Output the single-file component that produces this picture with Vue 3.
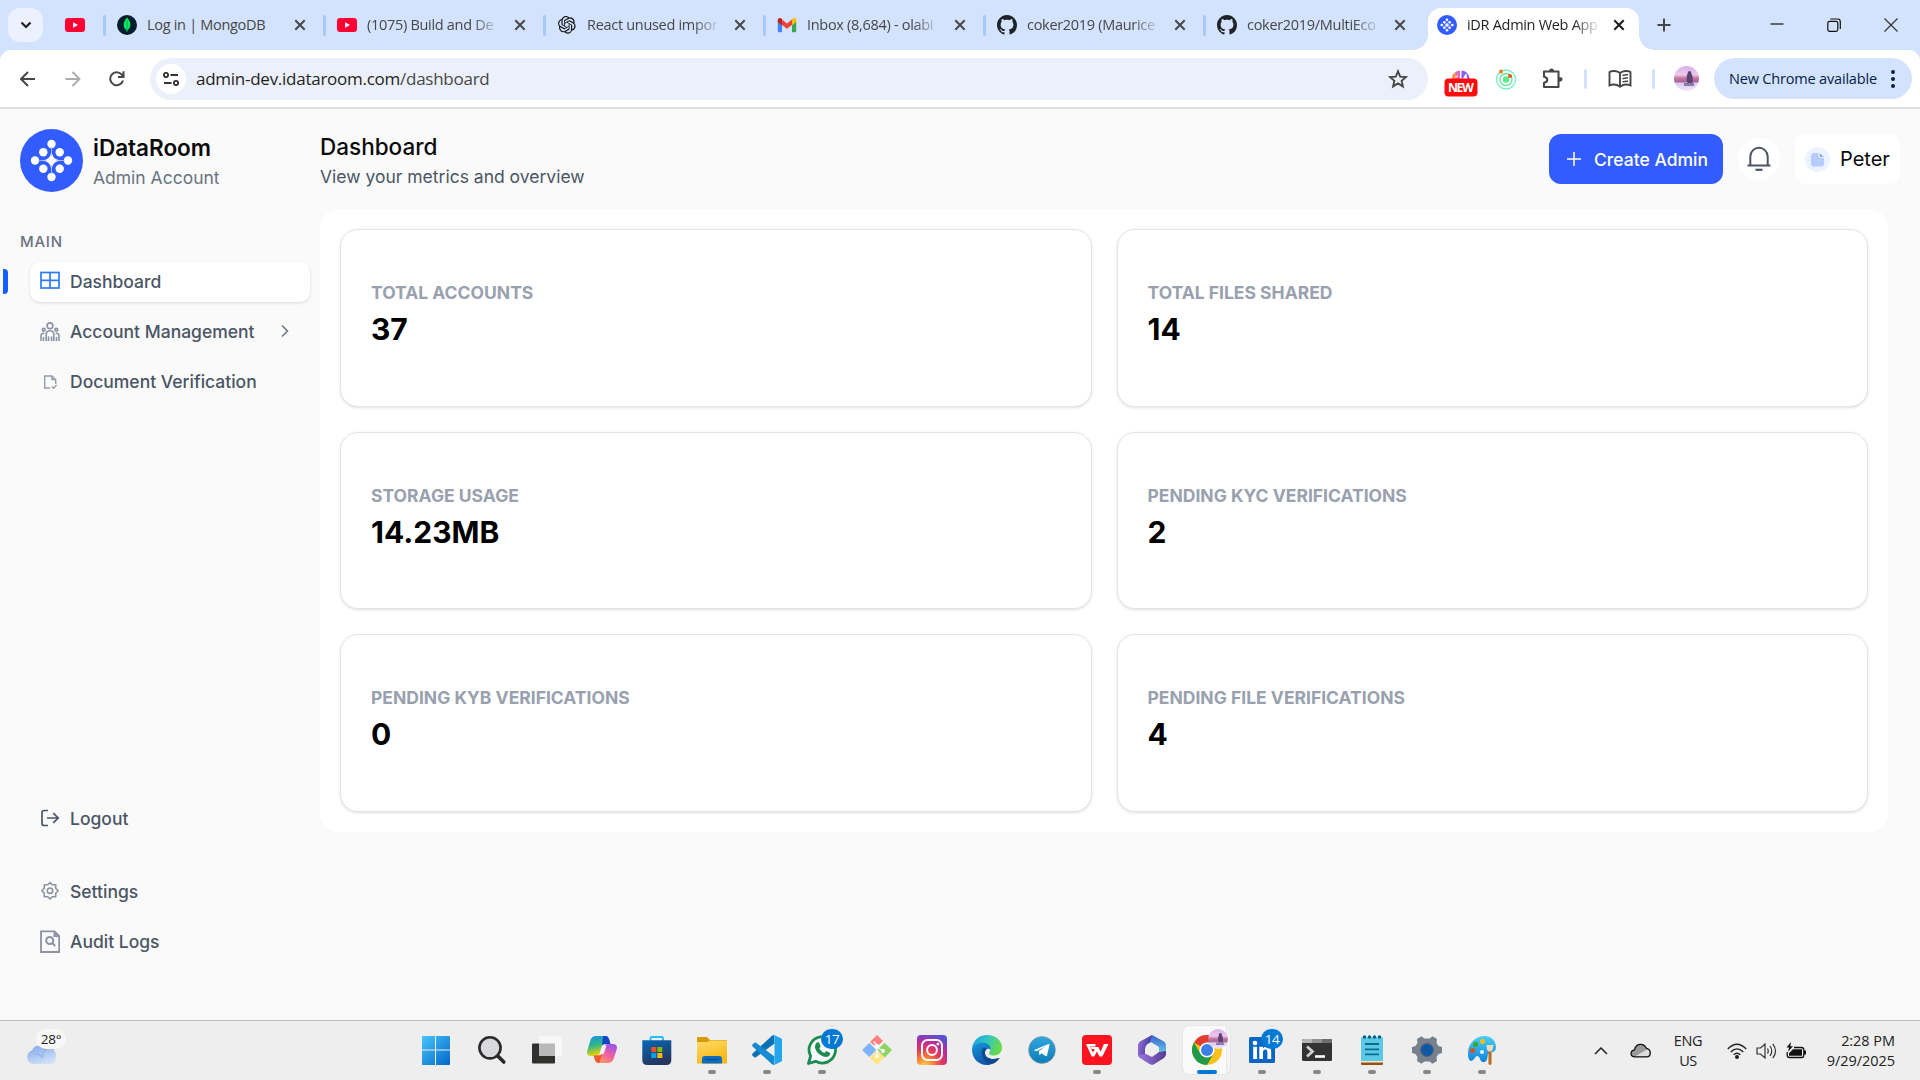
<script setup>
const logo = `<circle cx="31.5" cy="31.5" r="31.5" fill="#325cff"/><g fill="#fff"><circle cx="31.5" cy="15" r="4.2"/><circle cx="23.3" cy="23.2" r="4.2"/><circle cx="39.7" cy="23.2" r="4.2"/><circle cx="15" cy="31.5" r="4.2"/><circle cx="48" cy="31.5" r="4.2"/><circle cx="23.3" cy="39.8" r="4.2"/><circle cx="39.7" cy="39.8" r="4.2"/><circle cx="31.5" cy="48" r="4.2"/><path d="M31.5 25.5Q32.8 30.2 37.5 31.5Q32.8 32.8 31.5 37.5Q30.2 32.8 25.500 31.5Q30.2 30.2 31.5 25.500z" stroke="#fff" stroke-width="1.6"/></g><path d="M18 31.5H27M36 31.5H45M31.5 18V27M31.5 36V45" stroke="#b9c8ff" stroke-width=".8"/>`
const youtube = `<rect x="0" y="3" width="20" height="14" rx="3.2" fill="#ff0033"/><path d="M8 7.2v5.6l5-2.8z" fill="#fff"/>`
const github = `<path transform="scale(1.25)" fill="#1f2328" d="M8 0C3.58 0 0 3.58 0 8c0 3.54 2.29 6.53 5.47 7.59.4.07.55-.17.55-.38 0-.19-.01-.82-.01-1.49-2.01.37-2.53-.49-2.69-.94-.09-.23-.48-.94-.82-1.13-.28-.15-.68-.52-.01-.53.63-.01 1.08.58 1.23.82.72 1.21 1.87.87 2.33.66.07-.52.28-.87.51-1.07-1.78-.2-3.64-.89-3.64-3.95 0-.87.31-1.59.82-2.15-.08-.2-.36-1.02.08-2.12 0 0 .67-.21 2.2.82.64-.18 1.32-.27 2-.27.68 0 1.36.09 2 .27 1.53-1.04 2.2-.82 2.2-.82.44 1.1.16 1.92.08 2.12.51.56.82 1.27.82 2.15 0 3.07-1.87 3.75-3.65 3.95.29.25.54.73.54 1.48 0 1.07-.01 1.93-.01 2.2 0 .21.15.46.55.38A8.013 8.013 0 0016 8c0-4.42-3.58-8-8-8z"/>`
const tabs = [
  { title: 'Log in | MongoDB', short: true, icon: `<circle cx="10" cy="10" r="10" fill="#001e2b"/><path d="M10 2.6C12.4 5.2 13.4 7.600 13.300 10c-.1 2.300-1.300 4.200-2.900 5.300L10.200 17h-.5l-.2-1.700C7.900 14.200 6.700 12.300 6.700 10 6.700 7.600 7.700 5.200 10 2.600z" fill="#00ed64"/><path d="M10 5v10" stroke="#0a9c47" stroke-width=".8"/>` },
  { title: '(1075) Build and De', icon: youtube },
  { title: 'React unused impor', icon: `<path transform="translate(1 1) scale(.735)" fill="#111" d="M22.2819 9.8211a5.9847 5.9847 0 0 0-.5157-4.9108 6.0462 6.0462 0 0 0-6.5098-2.9A6.0651 6.0651 0 0 0 4.9807 4.1818a5.9847 5.9847 0 0 0-3.9977 2.9 6.0462 6.0462 0 0 0 .7427 7.0966 5.98 5.98 0 0 0 .511 4.9107 6.051 6.051 0 0 0 6.5146 2.9001A5.9847 5.9847 0 0 0 13.2599 24a6.0557 6.0557 0 0 0 5.7718-4.2058 5.9894 5.9894 0 0 0 3.9977-2.9001 6.0557 6.0557 0 0 0-.7475-7.0729zm-9.022 12.6081a4.4755 4.4755 0 0 1-2.8764-1.0408l.1419-.0804 4.7783-2.7582a.7948.7948 0 0 0 .3927-.6813v-6.7369l2.02 1.1686a.071.071 0 0 1 .038.052v5.5826a4.504 4.504 0 0 1-4.4945 4.4944zm-9.6607-4.1254a4.4708 4.4708 0 0 1-.5346-3.0137l.142.0852 4.783 2.7582a.7712.7712 0 0 0 .7806 0l5.8428-3.3685v2.3324a.0804.0804 0 0 1-.0332.0615L9.74 19.9502a4.4992 4.4992 0 0 1-6.1408-1.6464zM2.3408 7.8956a4.485 4.485 0 0 1 2.3655-1.9728V11.6a.7664.7664 0 0 0 .3879.6765l5.8144 3.3543-2.0201 1.1685a.0757.0757 0 0 1-.071 0l-4.8303-2.7865A4.504 4.504 0 0 1 2.3408 7.872zm16.5963 3.8558L13.1038 8.364 15.1192 7.2a.0757.0757 0 0 1 .071 0l4.8303 2.7913a4.4944 4.4944 0 0 1-.6765 8.1042v-5.6772a.79.79 0 0 0-.407-.667zm2.0107-3.0231l-.142-.0852-4.7735-2.7818a.7759.7759 0 0 0-.7854 0L9.409 9.2297V6.8974a.0662.0662 0 0 1 .0284-.0615l4.8303-2.7866a4.4992 4.4992 0 0 1 6.6802 4.66zM8.3065 12.863l-2.02-1.1638a.0804.0804 0 0 1-.038-.0567V6.0742a4.4992 4.4992 0 0 1 7.3757-3.4537l-.142.0805L8.704 5.459a.7948.7948 0 0 0-.3927.6813zm1.0976-2.3654l2.602-1.4998 2.6069 1.4998v2.9994l-2.5974 1.4997-2.6067-1.4997Z"/>` },
  { title: 'Inbox (8,684) - olabi', icon: `<path d="M.8 6v10c0 .7.5 1.200 1.200 1.200h3V9z" fill="#4285f4"/><path d="M15 9v8.200h3c.7 0 1.200-.5 1.200-1.200V6z" fill="#34a853"/><path d="M5 4.500 10 8.400l5-3.900V10l-5 3.800L5 10z" fill="#ea4335"/><path d="M.8 5.200C.8 3 3.200 2.300 5 4v6.200L.8 7z" fill="#c5221f"/><path d="M19.200 5.200C19.200 3 16.800 2.300 15 4v6.200L19.200 7z" fill="#fbbc04"/>` },
  { title: 'coker2019 (Maurice', icon: github },
  { title: 'coker2019/MultiEco', icon: github },
]
const nav = [
  { label: 'Dashboard', active: true, icon: `<g fill="none" stroke="#2f7bf6" stroke-width="1.700"><rect x="1" y="1.500" width="18" height="15.500"/><path d="M10 1.500v16M1 9.300h18"/></g>` },
  { label: 'Account Management', arrow: true, icon: `<g fill="none" stroke="#8c92a4" stroke-width="1.600" stroke-linecap="round"><circle cx="10" cy="4.800" r="2.900"/><circle cx="3.700" cy="8.800" r="1.400"/><circle cx="16.300" cy="8.800" r="1.400"/><path d="M6.200 19.500v-6c0-5 7.600-5 7.600 0v6M8.500 19.500v-3.500M11.500 19.500v-3.500M1 19.500v-4.500c0-2 1.300-3 2.800-2.600M19 19.500v-4.500c0-2-1.300-3-2.800-2.600M3.500 19.500v-3M16.500 19.500v-3"/></g>` },
  { label: 'Document Verification', icon: `<g fill="none" stroke="#979caf" stroke-width="1.400"><path d="M10 17H4.700V5H12l3.700 3.700V13M12 5v3.500h3.500M11.700 15.500l1.900 1.800 3-3.300"/></g>` },
]
const lower = [
  { label: 'Logout', icon: `<g fill="none" stroke="#4b5565" stroke-width="1.700"><path d="M8 2.500H4.200C2.800 2.500 2 3.300 2 4.500v11c0 1.300.8 2 2.200 2H8M7 10h11.200M13.200 5.200 18.200 10l-5 4.800"/></g>` },
  { label: 'Settings', icon: `<g fill="none" stroke="#8c92a4" stroke-width="1.600" stroke-linejoin="round"><path d="M10 1.500 12.200 3.700H15.700V7.200L18.200 9.700 15.700 12.200V15.700H12.200L10 18 7.800 15.700H4.300V12.200L1.800 9.700 4.300 7.200V3.700H7.800z"/><circle cx="10" cy="9.700" r="2.700"/></g>` },
  { label: 'Audit Logs', icon: `<path d="M1 .3H14.500L19.200 5V21H1z" fill="none" stroke="#8c92a4" stroke-width="1.800"/><path d="M13.500 0v6h6z" fill="#8c92a4"/><g fill="none" stroke="#8c92a4" stroke-width="2"><circle cx="9.700" cy="9.500" r="3.500"/><path d="m12.200 12 3 3"/></g>` },
]
const cards = [
  ['TOTAL ACCOUNTS', '37'], ['TOTAL FILES SHARED', '14'],
  ['STORAGE USAGE', '14.23MB'], ['PENDING KYC VERIFICATIONS', '2'],
  ['PENDING KYB VERIFICATIONS', '0'], ['PENDING FILE VERIFICATIONS', '4'],
]
const avatar = `<defs><clipPath id="av"><circle cx="12.500" cy="12.500" r="12.500"/></clipPath><linearGradient id="avg" x2="0" y2="1"><stop offset="0" stop-color="#d9b0e8"/><stop offset=".35" stop-color="#ecc8ee"/><stop offset=".48" stop-color="#c67a9f"/><stop offset=".62" stop-color="#a9659a"/><stop offset=".7" stop-color="#dccbee"/><stop offset="1" stop-color="#f1e6f7"/></linearGradient></defs><g clip-path="url(#av)"><rect width="25" height="25" fill="url(#avg)"/><path d="M13.500 8c0-4 4-4 4 0 1.500 2 1.500 6 1 9h-5c-1.500-3-1-7 0-9z" fill="#5a4272"/><path d="M10 17h10v3H10z" fill="#8b7aae"/></g>`
const apps = [
  { name: 'start', icon: `<defs><linearGradient id="w1" gradientUnits="userSpaceOnUse" x1="0" y1="0" x2="29" y2="30"><stop offset="0" stop-color="#4cc8fb"/><stop offset="1" stop-color="#0067c8"/></linearGradient></defs><path transform="translate(-1 0)" fill="url(#w1)" d="M0 2q0-1 1-1h13v13.500H0zM15 1h13q1 0 1 1v12.500H15zM0 15.500h14V30H1q-1 0-1-1zM15 15.500h14V29q0 1-1 1H15z"/>` },
  { name: 'search', icon: `<circle cx="13" cy="12.800" r="10.600" fill="#d9dadd" stroke="#2a2a2a" stroke-width="2.600"/><path d="m20.800 21 6 6" stroke="#2a2a2a" stroke-width="3.600" stroke-linecap="round"/>` },
  { name: 'tasks', icon: `<rect x="0" y="8.500" width="23" height="20" rx="1" fill="#30302f"/><rect x="7" y="1" width="23" height="20" rx="1" fill="#f7f7f7"/><path d="M7 8.500h16V21H7z" fill="#b9b9b9"/>` },
  { name: 'copilot', icon: `<defs><linearGradient id="c1" x2=".3" y2="1"><stop offset="0" stop-color="#1b8ff0"/><stop offset=".5" stop-color="#2fb68c"/><stop offset="1" stop-color="#f4d500"/></linearGradient><linearGradient id="c2" x1=".8" x2=".2" y2="1"><stop offset="0" stop-color="#9a55ee"/><stop offset=".5" stop-color="#ee5fa0"/><stop offset="1" stop-color="#ffa05a"/></linearGradient></defs><path d="M9 1H19q2 0 3 3l1.500 5H18c-2 0-3 1-3.500 3l-2 7q-.6 2-2.600 2H4c-4 0-4.500-3-3.500-6L3.500 5Q5 1 9 1z" fill="url(#c1)"/><path d="M16 1h3q2 0 3 3l1.500 5H18q-2 0-3 2z" fill="#1546c8"/><path d="M21 28H11q-2 0-3-3l-1.300-4.500H12c2 0 3-1 3.500-3l2-6.500q.6-2 2.600-2H26c4 0 4.500 3 3.500 6L26.500 24Q25 28 21 28z" fill="url(#c2)"/><path d="M6.700 20.500H12q2 0 3-2l-2.500 9.500H11q-2 0-3-3z" fill="#ee5a35"/><path d="M15.500 10.500h4l-2.800 8.500h-4z" fill="#f6f1f4"/>` },
  { name: 'store', icon: `<defs><linearGradient id="s1" x2=".4" y2="1"><stop offset="0" stop-color="#0568b9"/><stop offset="1" stop-color="#26365d"/></linearGradient></defs><path d="M8.500 7V3.500q0-1.500 1.500-1.500h9.500q1.500 0 1.500 1.500V7" fill="none" stroke="#21bdf3" stroke-width="1.900"/><path d="M.3 5.200h29V25q0 5-5 5h-19q-5 0-5-5z" fill="url(#s1)"/><path d="M9.300 12h5v5h-5z" fill="#f25022"/><path d="M15.300 12h5v5h-5z" fill="#7fba00"/><path d="M9.300 18h5v5h-5z" fill="#00a4ef"/><path d="M15.300 18h5v5h-5z" fill="#ffb900"/>` },
  { name: 'files', run: 1, icon: `<defs><linearGradient id="f1" x2=".4" y2="1"><stop offset="0" stop-color="#ffdc6c"/><stop offset="1" stop-color="#f8b712"/></linearGradient></defs><path d="M0 3q0-1 1-1h9l3 3h16q1 0 1 1v5H0z" fill="#d99a05"/><path d="M0 7h10l3-1.500h17V28.500H0z" fill="url(#f1)"/><path d="M5 28.500V24q0-3 3-3h14q3 0 3 3v4.500z" fill="#0f6cbd"/><path d="M8.500 24.500h13" stroke="#0a4689"/>` },
  { name: 'code', run: 1, icon: `<path d="M22 0 22.500 8.500 4 22.300Q3 23 2 22L.5 20.500Q-.3 19.500.6 18.500L20 .8z" fill="#0a71b4"/><path d="M.6 11.500Q-.3 10.500.5 9.500L2 8Q3 7 4 7.700L22.500 21.500 22 30 20 29.200z" fill="#178bd2"/><path d="M22 0l7 3.200q1 .5 1 1.500v20.600q0 1-1 1.500L22 30q-1 .2-2-.8 2.500 1 2.500-1.200V2Q22.500-.2 20 .8 21-.2 22 0z" fill="#24a6ee"/>` },
  { name: 'whatsapp', run: 1, badge: '17', icon: `<path d="M1.500 28.500 3.600 21A13.200 13.200 0 1 1 8.700 26.300z" fill="#f7f9f8" stroke="#1f8b54" stroke-width="2.800" stroke-linejoin="round"/><path d="M10 7.500c1-.8 2-.2 2.500 1l1 2.500c.3.800-.8 1.800-1.200 2.300 1 2 2.500 3.600 5 4.700.8-.8 1.500-2 2.500-1.700l2.600 1.300c1 .5.700 1.700.2 2.600-1.200 2-4 2-6.200 1.200-4.300-1.500-7-4.500-8.200-8-.7-2.200 0-4.500 1.800-5.900z" fill="#1f8b54"/>` },
  { name: 'git', icon: `<path d="m15 0 6 6-3.500 3.500L11.500 10 8 7z" fill="#ff8080"/><path d="m15 30-7.300-7.300 5-5.200h5l4.600 5z" fill="#ffe680"/><path d="m7.300 8 7 7-7 7L0 15z" fill="#80b3ff"/><path d="m22.500 7.800 7.500 7.200-7.300 7.500L15.500 15z" fill="#8dd35f"/><path d="M11.500 6.500 15 10v11M15 12l6 4" stroke="#f7f2ea" stroke-width="1.500" fill="none"/><g fill="#fff"><circle cx="15" cy="11" r="2"/><circle cx="15" cy="21" r="2"/><circle cx="21" cy="16" r="2"/></g>` },
  { name: 'instagram', icon: `<defs><radialGradient id="i1" cx=".25" cy="1.050" r="1.100"><stop offset="0" stop-color="#ffd75a"/><stop offset=".25" stop-color="#fb8b33"/><stop offset=".52" stop-color="#e13a5c"/><stop offset=".78" stop-color="#b92b9c"/><stop offset="1" stop-color="#5a50d4"/></radialGradient></defs><rect width="30" height="30" rx="4" fill="url(#i1)"/><g fill="none" stroke="#fff" stroke-width="2"><rect x="5" y="5" width="20" height="20" rx="5.500"/><circle cx="15" cy="15" r="4.900"/></g><circle cx="20.900" cy="9.100" r="1.400" fill="#fff"/>` },
  { name: 'edge', icon: `<defs><linearGradient id="e1" x2="1" y2=".3"><stop offset="0" stop-color="#1b9de0"/><stop offset=".5" stop-color="#2fc3c8"/><stop offset="1" stop-color="#67d94e"/></linearGradient><linearGradient id="e2" x2=".6" y2="1"><stop offset="0" stop-color="#1596dd"/><stop offset="1" stop-color="#0f4da3"/></linearGradient></defs><path d="M0 13C1.500 4 8 0 15 0c9 0 15 6 15 12.500 0 5-3.500 8-8 8-4 0-5.500-1.500-4.500-3.500 2-4-1-7-5.500-7-5 0-9 2-12 5z" fill="url(#e1)"/><path d="M0 14.500C2 10 6 7.500 11 7.800c5 .3 8 3.700 7.500 6.700-3-2-6 1-5.500 4 .6 4.500 6 7 14.500 4.500C24 28 19.500 30 15 30 6 30 0 23 0 14.500z" fill="url(#e2)"/><path d="M10.500 13.500c-3 8 3 16 11.500 14.500 2-1 4-2.600 5.500-5-8.500 2.500-13.900 0-14.500-4.500-.3-2 .5-3.700 1.700-4.500-1.500-1.200-3-1.500-4.200-.5z" fill="#114a8b"/>` },
  { name: 'telegram', icon: `<defs><linearGradient id="t1" x2="0" y2="1"><stop offset="0" stop-color="#30a7df"/><stop offset="1" stop-color="#0c7db6"/></linearGradient></defs><circle cx="15" cy="15" r="13.400" fill="url(#t1)" stroke="#8b979d" stroke-width=".7"/><path d="M6.500 15.200 21.500 9q1.200-.3 1 1L20 20.500q-.4 1.200-1.500.5l-4-2.800-2 2-.8-4 6.800-5-8.500 4.700z" fill="#fff"/>` },
  { name: 'wps', run: 1, icon: `<rect width="30" height="30" rx="4" fill="#fb1320"/><path d="M6.500 14H15M4.800 9.800H13.500L16 20l4.700-9.500M5.500 10.500 10.500 20.500 14 13M18 9.800H25.300L20 20.500" fill="none" stroke="#fff" stroke-width="0"/><path d="M4 9h9.500v2.600H8l3 5.900 1.700-3.500H9.500l-1-2h8l2 4.800L22 9h4.500l-6.200 12.500h-2.800l-2.700-5-2.500 5H9.700z" fill="#fff"/>` },
  { name: 'office', icon: `<defs><linearGradient id="o1" x2="1" y2=".3"><stop offset="0" stop-color="#a06fd8"/><stop offset="1" stop-color="#3c3a9c"/></linearGradient><linearGradient id="o2" x2="0" y2="1"><stop offset="0" stop-color="#3a60cf"/><stop offset="1" stop-color="#62d3ed"/></linearGradient><linearGradient id="o3" x2="1"><stop offset="0" stop-color="#9b7ae0"/><stop offset="1" stop-color="#553a90"/></linearGradient></defs><path d="M15 0 3 6.500Q1 8 1 10v11l7 2V14q0-3 2.500-5L15 6.500z" fill="url(#o1)"/><path d="M15 0 27 6.500Q29 8 29 10v10l-7-3v-5L13 6.500z" fill="url(#o2)"/><path d="M1 20q0 2 2 3l10 6.300q2 1 4 0L27 23q2-1.500 2-4v-3l-7 1-7 5-6-3z" fill="url(#o3)"/><path d="m14.800 9.500 5.200 3v5.500l-5.200 3-5.200-3v-5.500z" fill="#eee"/>` },
  { name: 'chrome', run: 2, icon: `<circle cx="15" cy="15" r="15" fill="#fbc116"/><path d="M15 15 2 7.500A15 15 0 0 1 28 7.500H15z" fill="#e33b2e"/><path d="M2 7.500A15 15 0 0 0 15 30l6.500-11.200L8.500 18.800z" fill="#229a4a"/><circle cx="15" cy="15" r="7.600" fill="#fff"/><circle cx="15" cy="15" r="6" fill="#3f7de8"/>` },
  { name: 'linkedin', run: 1, badge: '14', icon: `<rect x="2" y="2" width="26" height="26" rx="1.500" fill="#0b65c3"/><g fill="#fff"><circle cx="8" cy="8" r="2.300"/><path d="M6.200 11.700H10V24H6.200zM12.300 11.700H16v1.700c.8-1.300 2-2 3.800-2 3.500 0 4.400 2.300 4.400 5.300V24h-3.800v-6.300c0-1.700-.2-3.100-2-3.100S16 16 16 17.600V24h-3.700z"/></g>` },
  { name: 'terminal', run: 1, icon: `<rect y="4" width="30" height="22" rx="1.500" fill="#333"/><path d="M0 8V5.500Q0 4 1.500 4H10v4z" fill="#b5b5b5"/><path d="M10 4h10v4H10z" fill="#929292"/><path d="M20 4h8.500Q30 4 30 5.500V8H20z" fill="#6d6d6d"/><path d="m5 11.500 5.500 5L5 21.500" fill="none" stroke="#d2d2d2" stroke-width="2.700"/><path d="M13 21.500h10" stroke="#fff" stroke-width="2.600"/>` },
  { name: 'notepad', run: 1, icon: `<path d="M4 26h22v3q0 1-1 1H5q-1 0-1-1z" fill="#9b4f12"/><path d="M4 3q0-1 1-1h20q1 0 1 1v24H4z" fill="#5bc9e4"/><path d="M4 26h22v1.500H4z" fill="#f5e9d8"/><g fill="#0b5b7c"><circle cx="7.500" cy="2" r="1.700"/><circle cx="12.500" cy="2" r="1.700"/><circle cx="17.500" cy="2" r="1.700"/><circle cx="22.500" cy="2" r="1.700"/></g><path d="M8 9h14M8 14.300h14M8 19.300h14" stroke="#096a93" stroke-width="1.800"/>` },
  { name: 'settings', run: 1, icon: `<path d="M9.500 1.300 12.500 3.500h5L20.500 1.300 25 4l-.5 4 2 3 3.500 1v6l-3.500 1-2 3 .5 4-4.500 2.700-3-2.200h-5l-3 2.200L5 26l.5-4-2-3L0 18v-6l3.500-1 2-3L5 4z" fill="#76818d"/><circle cx="15" cy="15" r="6.300" fill="#0f57a7" stroke="#525c68" stroke-width="1"/>` },
  { name: 'paint', run: 1, icon: `<defs><linearGradient id="p1" x2="0" y2="1"><stop offset="0" stop-color="#49d0f4"/><stop offset="1" stop-color="#1282d8"/></linearGradient></defs><path d="M17 1c7-.5 12 5 12 11 0 4-2 5-5 5.500-4 .5-3 4-4 7-.6 2-3 3-4.500 2.500-3-1-2-5-5-6-2-.6-3 4-6 5-3 0-3.500-4-3.500-8C1 9 8 1.500 17 1z" fill="url(#p1)"/><circle cx="15.500" cy="6.500" r="2.500" fill="#fbbb16"/><circle cx="8.500" cy="9.500" r="2.500" fill="#37a826"/><circle cx="5.500" cy="15.500" r="2.500" fill="#d9501f"/><circle cx="15" cy="17" r="2" fill="#e6f6fb"/><path d="M21.500 16h3v13q-1.500 2-3 0z" fill="#b86b1d"/><path d="M19.500 10h7l-.8 4.500-1.200 2h-3l-1.500-2z" fill="#eadac0"/>` },
]
</script>

<template>
  <div class="screen">
    <div class="strip">
      <div class="tabsearch"><svg width="12" height="8" viewBox="0 0 12 8"><path d="m1.500 1.500 4.500 4.500 4.500-4.500" fill="none" stroke="#1f1f1f" stroke-width="2.200" /></svg></div>
      <div class="pinned"><svg width="20" height="20" viewBox="0 0 20 20" v-html="youtube"></svg></div>
      <div v-for="t in tabs" :key="t.title" class="tab">
        <i class="sep"></i>
        <svg width="20" height="20" viewBox="0 0 20 20" v-html="t.icon"></svg>
        <span class="title" :class="{ fade: !t.short }">{{ t.title }}</span>
        <svg class="x" width="12" height="12" viewBox="0 0 12 12"><path d="m1.300 1.300 9.400 9.400m0-9.400-9.400 9.400" stroke="#474747" stroke-width="2" /></svg>
      </div>
      <div class="tab active">
        <svg width="20" height="20" viewBox="0 0 63 63" v-html="logo"></svg>
        <span class="title fade">iDR Admin Web App</span>
        <svg class="x" width="12" height="12" viewBox="0 0 12 12"><path d="m1.300 1.300 9.400 9.400m0-9.400-9.400 9.400" stroke="#1f1f1f" stroke-width="2.100" /></svg>
      </div>
      <svg class="plus" width="14" height="14" viewBox="0 0 14 14"><path d="M7 .5v13M.5 7h13" stroke="#474747" stroke-width="2" /></svg>
      <div class="win">
        <svg width="14" height="14" viewBox="0 0 14 14"><path d="M.5 6h13" stroke="#111" stroke-width="1.200" /></svg>
        <svg width="14" height="14" viewBox="0 0 14 14" fill="none" stroke="#111" stroke-width="1.200"><rect x=".8" y="3.300" width="10" height="10" rx="1.800" /><path d="M3.300 1h7.200q2.800 0 2.800 2.800V11" /></svg>
        <svg width="14" height="14" viewBox="0 0 14 14"><path d="m.5.500 13 13m0-13-13 13" stroke="#333" stroke-width="1.200" /></svg>
      </div>
    </div>

    <div class="toolwrap">
      <div class="toolbar">
        <svg class="back" width="16" height="16" viewBox="0 0 16 16"><path d="M15 8H1M8 1 1 8l7 7" fill="none" stroke="#474747" stroke-width="2" /></svg>
        <svg class="fwd" width="16" height="16" viewBox="0 0 16 16"><path d="M.5 8h14M7.500 1l7 7-7 7" fill="none" stroke="#ababab" stroke-width="1.900" /></svg>
        <svg class="reload" width="16" height="16" viewBox="0 0 16 16"><path d="M14 9.500A6.500 6.500 0 1 1 12.600 3.400L14 5M14.500 .3V6H9" fill="none" stroke="#474747" stroke-width="2" /></svg>
        <div class="omni">
          <span class="site"><svg width="16" height="14" viewBox="0 0 16 14" fill="none" stroke="#333" stroke-width="1.900"><circle cx="3" cy="3" r="2.100" /><path d="M7.500 3h7.500M1 11h7.500" /><circle cx="13" cy="11" r="2.100" /></svg></span>
          <span class="url">admin-dev.idataroom.com<em>/dashboard</em></span>
          <svg class="star" width="20" height="20" viewBox="0 0 20 20"><path d="m10 2.300 2.200 5.300 5.700.5-4.300 3.700 1.300 5.600L10 14.400l-4.900 3 1.300-5.600L2.100 8.100l5.700-.5z" fill="none" stroke="#474747" stroke-width="1.900" /></svg>
        </div>
        <div class="ext">
          <svg width="34" height="28" viewBox="0 0 34 28"><path d="M8 10c0-4 4-9 8-8v8z" fill="#e06bc5" /><path d="M8 10c0-4 1-6 4-6l1 6z" fill="#fb9250" /><path d="M17.500 2c4-1 8 4 8 8h-8z" fill="#8c5af3" /><path d="m19 10 3-5 1 5zM11 8l3-1" fill="#fff" stroke="#fff" stroke-width=".8" /><rect x=".5" y="9.500" width="33" height="18" rx="4" fill="#fe0b0b" /><text x="17" y="23" text-anchor="middle" font-family="Open Sans, sans-serif" font-size="12.300" font-weight="700" fill="#fff" textLength="26">NEW</text></svg>
        </div>
        <svg class="radar" width="22" height="22" viewBox="0 0 22 22"><g fill="none" stroke="#79efbf" stroke-width="1.300"><circle cx="11" cy="11.500" r="9.500" /><circle cx="11" cy="11.500" r="6" stroke="#5de39b" /></g><circle cx="11" cy="11.500" r="3.200" fill="#58ed86" /><circle cx="6" cy="3.500" r="2" fill="#f47b20" /><circle cx="15" cy="8" r="2" fill="#f4511e" /></svg>
        <svg class="puzzle" width="22" height="22" viewBox="0 0 22 22"><path d="M2 3.500H16.500V19H2V14.800c4.300-.6 4.300-5.400 0-6z" fill="none" stroke="#474747" stroke-width="2.100" stroke-linejoin="round" /><path d="M7 3q0-2.500 2.500-2.500T12 3zM17 9q3.500 0 3.500 2.300T17 13.700z" fill="#474747" /></svg>
        <i class="vsep s1"></i>
        <svg class="book" width="24" height="20" viewBox="0 0 24 20" fill="none" stroke="#474747" stroke-width="1.900"><path d="M12 4C9 1.500 4 1.500 1.500 3v13.500C5 15 9 15.500 12 17.700c3-2.200 7-2.700 10.500-1.200V3C20 1.500 15 1.500 12 4zM12 4v13" /><path d="M14.500 6.500q3-1 5.500-.7M14.500 9.700q3-1 5.500-.7M14.500 12.900q3-1 5.500-.7" stroke-width="1.500" /></svg>
        <i class="vsep s2"></i>
        <svg class="me" width="25" height="25" viewBox="0 0 25 25" v-html="avatar"></svg>
        <div class="update"><span>New Chrome available</span><svg width="4" height="18" viewBox="0 0 4 18" fill="#041e49"><circle cx="2" cy="2" r="2" /><circle cx="2" cy="9" r="2" /><circle cx="2" cy="16" r="2" /></svg></div>
      </div>
    </div>

    <div class="page">
      <aside>
        <div class="brand">
          <svg width="63" height="63" viewBox="0 0 63 63" v-html="logo"></svg>
          <div class="names"><b>iDataRoom</b><span>Admin Account</span></div>
        </div>
        <div class="section">MAIN</div>
        <div v-for="n in nav" :key="n.label" class="item" :class="{ on: n.active }">
          <svg width="20" height="20" viewBox="0 0 20 20" v-html="n.icon"></svg>
          <span>{{ n.label }}</span>
          <svg v-if="n.arrow" class="chev" width="8" height="14" viewBox="0 0 8 14"><path d="m1 1.500 5.500 5.500L1 12.500" fill="none" stroke="#6a7282" stroke-width="1.500" /></svg>
        </div>
        <div class="foot">
          <div v-for="n in lower" :key="n.label" class="item">
            <svg width="20" height="23" viewBox="0 -1 20 23" v-html="n.icon"></svg>
            <span>{{ n.label }}</span>
          </div>
        </div>
      </aside>
      <main>
        <header>
          <div class="heading"><h1>Dashboard</h1><p>View your metrics and overview</p></div>
          <button class="create"><svg width="14" height="14" viewBox="0 0 14 14"><path d="M7 0v14M0 7h14" stroke="#fff" stroke-width="1.500" /></svg>Create Admin</button>
          <span class="bell"><svg width="24" height="26" viewBox="0 0 24 26" fill="none" stroke="#4a5565" stroke-width="2"><path d="M.5 19.500h23M3.300 19.500V10.500a8.700 8.700 0 0 1 17.400 0v9" /><path d="M8.500 23.800h7" stroke-width="2.200" /></svg></span>
          <div class="user"><svg width="25" height="25" viewBox="0 0 25 25"><circle cx="12.500" cy="12.500" r="12.500" fill="#ecf2ff" /><path d="M9 6h4.500v2.500Q13.500 11 16 11h3v5.500q0 3-3 3H9q-3 0-3-3V9q0-3 3-3z" fill="#b5ccfd" /><path d="M14.700 6.200 18.700 10h-2.500q-1.500 0-1.500-1.500z" fill="#7fa5fb" /></svg>Peter</div>
        </header>
        <section class="panel">
          <article v-for="c in cards" :key="c[0]"><h2>{{ c[0] }}</h2><strong>{{ c[1] }}</strong></article>
        </section>
      </main>
    </div>

    <div class="taskbar">
      <div class="weather"><svg width="34" height="24" viewBox="0 0 34 24"><path d="M18 0h10.500v9H18z" fill="#f6821f" /><defs><linearGradient id="wc" x2=".5" y2="1"><stop offset="0" stop-color="#7da6ea" /><stop offset="1" stop-color="#cfe0f8" /></linearGradient></defs><path d="M8 22a7 7 0 0 1-1-13.500C8.500 4 13 2.500 17 4.500c2 1 3 2.500 3.500 3.500 6-3 10.500 0 10.500 6 0 5-2 8-6 8z" fill="url(#wc)" /><path d="M9 12q5-1 8 3 1-5 4-7" fill="none" stroke="#8fb2ee" stroke-width="1.300" /></svg><span>28°</span></div>
      <div class="apps">
        <div v-for="a in apps" :key="a.name" class="app" :class="{ cur: a.run === 2 }">
          <svg width="30" height="30" viewBox="0 0 30 30" v-html="a.icon"></svg>
          <i v-if="a.run" class="run"></i>
          <span v-if="a.badge" class="badge">{{ a.badge }}</span>
          <svg v-if="a.run === 2" class="prof" width="20" height="20" viewBox="0 0 25 25" v-html="avatar"></svg>
        </div>
      </div>
      <div class="tray">
        <svg class="up" width="14" height="8" viewBox="0 0 14 8"><path d="m1 7 6-6 6 6" fill="none" stroke="#222" stroke-width="1.500" /></svg>
        <svg class="cloud" width="21" height="15" viewBox="0 0 21 15"><path d="M5 13.800c-5 0-5.300-6-.5-7 1.500-6.500 9-7.500 12-1.500 5 1 5 8.500 0 8.500z" fill="#999" /><path d="M5 13.500q8-5 13-7.500c3 3 2 7.500-1.500 7.500z" fill="#ddd" /><path d="M5 13.800c-5 0-5.300-6-.5-7 1.500-6.500 9-7.500 12-1.500 5 1 5 8.500 0 8.500z" fill="none" stroke="#111" stroke-width="1.300" /></svg>
        <div class="lang">ENG<br>US</div>
        <svg class="wifi" width="20" height="16" viewBox="0 0 20 16" fill="none" stroke="#222" stroke-width="1.400"><path d="M.8 6q9.200-9.500 18.400 0M3.800 9q6.200-6.300 12.400 0M6.700 11.800q3.300-3.200 6.600 0" /><circle cx="10" cy="14" r="1.300" fill="#222" /></svg>
        <svg class="vol" width="21" height="18" viewBox="0 0 21 18" fill="none" stroke="#333" stroke-width="1.200"><path d="M1 6h3.500L9 2v14L4.500 12H1zM11.500 6.500q1.500 2.500 0 5M14 4q3.500 5 0 10M16.800 1.800q5.500 7.200 0 14.400" /></svg>
        <svg class="bat" width="21" height="18" viewBox="0 0 21 18"><path d="M8 5.500h7.500q2.300 0 2.300 2.300v5.400q0 2.300-2.300 2.300H3.500q-2.300 0-2.300-2.300V10" fill="none" stroke="#111" stroke-width="1.300" /><path d="M7 7.200h9v6.600H3v-2.500z" fill="#111" /><path d="M18 8.500h2v4h-2zM5 0 .5 5.500h2.700L2 9.800 7 4.300H4.300z" fill="#111" /></svg>
        <div class="clock">2:28 PM<br>9/29/2025</div>
      </div>
    </div>
  </div>
</template>

<style>
body { margin: 0; overflow: hidden; }
</style>

<style scoped>
* { box-sizing: border-box; }
svg { display: block; flex: none; }
.screen { width: 1920px; height: 1080px; display: flex; flex-direction: column; background: #fafafa; font-family: "Open Sans", "Noto Sans", sans-serif; overflow: hidden; }
.strip { height: 50px; background: #d3e2fd; display: flex; align-items: center; flex: none; }
.tabsearch { width: 35px; height: 34px; margin-left: 8px; border-radius: 12px; background: #ebf1fe; display: flex; align-items: center; justify-content: center; }
.pinned { width: 60px; padding-left: 22px; }
.tab { width: 220px; height: 50px; display: flex; align-items: center; flex: none; }
.sep { width: 3px; height: 21px; background: #a8c7fa; border-radius: 2px; margin-right: 11px; }
.title { width: 135px; margin-left: 10px; font-size: 14.500px; letter-spacing: -.3px; line-height: 22px; color: #474747; white-space: nowrap; }
.fade { mask-image: linear-gradient(90deg, #000 106px, transparent 134px); }
.x { margin-left: 12px; }
.tab.active { position: relative; width: 211px; height: 42px; align-self: flex-end; margin-left: 5px; padding: 0 0 8px 9px; background: #fff; border-radius: 13px 13px 0 0; }
.tab.active::before, .tab.active::after { content: ""; position: absolute; bottom: 0; width: 15px; height: 15px; }
.tab.active::before { left: -15px; background: radial-gradient(circle at 0 0, transparent 14.500px, #fff 15px); }
.tab.active::after { right: -15px; background: radial-gradient(circle at 100% 0, transparent 14.500px, #fff 15px); }
.active .title { color: #1f1f1f; }
.active .x { margin-left: 11px; }
.plus { margin-left: 18px; }
.win { margin-left: auto; display: flex; gap: 43px; padding-right: 22px; }
.toolwrap { height: 59px; flex: none; background: #d3e2fd; }
.toolbar { height: 59px; background: #fff; border-radius: 11px 11px 0 0; border-bottom: 2px solid #dfdfdf; display: flex; align-items: center; }
.back { margin-left: 20px; }
.fwd { margin-left: 29px; }
.reload { margin-left: 28px; }
.omni { width: 1278px; height: 42px; margin-left: 25px; border-radius: 21px; background: #ecf0fa; display: flex; align-items: center; padding-left: 6px; }
.site { width: 30px; height: 30px; border-radius: 50%; background: #fff; display: flex; align-items: center; justify-content: center; }
.url { margin-left: 10px; font-size: 17px; letter-spacing: -.26px; color: #1f1f1f; }
.url em { font-style: normal; color: #474747; }
.star { margin: 0 20px 0 auto; }
.ext { margin-left: 16px; padding-top: 9px; }
.radar { margin-left: 17px; }
.puzzle { margin-left: 25px; }
.vsep { width: 3px; height: 20px; border-radius: 2px; background: #d3e2fd; }
.s1 { margin-left: 20px; }
.book { margin-left: 21px; }
.s2 { margin-left: 20px; }
.me { margin-left: 19px; }
.update { width: 198px; height: 41px; margin-left: 15px; border-radius: 21px; background: #d3e2fd; display: flex; align-items: center; justify-content: space-between; padding: 0 17px 0 15px; font-size: 14.500px; letter-spacing: -.18px; color: #041e49; white-space: nowrap; }
.page { height: 911px; flex: none; display: flex; font-family: Inter, sans-serif; background: #fafafa; }
aside { width: 320px; display: flex; flex-direction: column; }
.brand { margin: 20px 0 0 20px; height: 63px; display: flex; align-items: center; gap: 10px; }
.names { padding-top: 3px; }
.brand b { display: block; font-size: 22.500px; line-height: 31px; font-weight: 600; color: #0a0a0a; }
.brand span { display: block; font-size: 17.500px; line-height: 29px; color: #6a7282; }
.section { margin: 39px 0 0 20px; height: 31px; font-size: 15px; line-height: 21px; font-weight: 500; letter-spacing: .75px; color: #6a7282; }
.item { position: relative; margin: 0 10px 10px 30px; height: 40px; display: flex; align-items: center; padding: 0 0 2px 10px; border-radius: 10px; font-size: 17.500px; font-weight: 500; color: #4a5565; }
.item span { margin-left: 10px; }
.item.on { background: #fff; box-shadow: 0 1px 3px rgba(0, 0, 0, .14); }
.item.on::before { content: ""; position: absolute; left: -27px; top: 7px; width: 5px; height: 25px; background: #155dfc; border-radius: 0 4px 4px 0; }
.chev { margin: 0 21px 0 auto; }
.foot { margin-top: auto; margin-bottom: 48px; }
.foot .item:first-child { margin-bottom: 33px; }
main { width: 1568px; }
header { height: 100px; display: flex; align-items: center; margin-right: -12px; }
.heading { flex: 1; padding-top: 6px; }
h1 { margin: 0; font-size: 22.500px; line-height: 30px; font-weight: 500; color: #0a0a0a; }
p { margin: 0; font-size: 17.500px; line-height: 30px; color: #4a5565; }
.create { width: 174px; height: 50px; border: 0; border-radius: 12px; background: #325cff; color: #fff; font: 500 17.500px Inter, sans-serif; display: flex; align-items: center; gap: 13px; padding: 0 0 0 18px; white-space: nowrap; }
.bell { width: 42px; height: 42px; margin: 0 15px; border-radius: 50%; background: #fff; display: flex; align-items: center; justify-content: center; }
.user { width: 105px; height: 50px; border-radius: 10px; background: #fff; display: flex; align-items: center; gap: 10px; padding-left: 10px; font-size: 20px; color: #0a0a0a; }
.panel { height: 623px; border-radius: 20px; background: #fff; padding: 20px; display: grid; grid-template-columns: 1fr 1fr; grid-auto-rows: 177.500px; gap: 25px; }
article { border: 1px solid #e5e5e5; border-radius: 18px; box-shadow: 0 1px 3px rgba(0, 0, 0, .12); padding: 48px 30px; background: #fff; }
h2 { margin: 0; font-size: 17.500px; line-height: 30px; font-weight: 650; color: #99a1af; }
strong { display: block; margin-top: 1px; font-size: 30px; line-height: 40px; font-weight: 700; color: #000; }
.taskbar { height: 60px; flex: none; background: #eee; border-top: 1px solid #bcbcbc; position: relative; display: flex; color: #222; }
.weather { position: relative; width: 409px; padding: 21px 0 0 25px; }
.weather span { position: absolute; left: 36px; top: 8px; width: 30px; height: 20px; border-radius: 10px; background: #f7f7f7; font-size: 13.500px; line-height: 20px; text-align: center; letter-spacing: -.3px; }
.apps { display: flex; }
.app { position: relative; width: 55px; height: 59px; display: flex; justify-content: center; padding-top: 14px; }
.app > svg { position: relative; }
.cur::before { content: ""; position: absolute; left: 4px; top: 5px; width: 47px; height: 48px; border-radius: 6px; background: linear-gradient(90deg, #fafafa 43px, #ddd 43px, #f4f4f4 44px); box-shadow: 0 0 1px #aaa; }
.run { position: absolute; left: 24px; top: 49px; width: 8px; height: 4px; border-radius: 2px; background: #878787; }
.cur .run { left: 18px; width: 20px; background: #0078d4; }
.badge { position: absolute; left: 27px; top: 8px; width: 22px; height: 20px; border-radius: 10px; background: #0078d4; color: #fff; font-size: 13.500px; line-height: 20px; text-align: center; letter-spacing: -.5px; }
.app > .prof { position: absolute; left: 29px; top: 8px; }
.tray { margin-left: auto; display: flex; align-items: center; padding-right: 25px; font-size: 14.500px; line-height: 20px; letter-spacing: -.4px; }
.cloud { margin-left: 22px; }
.lang { width: 30px; margin-left: 22px; text-align: center; }
.wifi { margin-left: 24px; }
.vol { margin-left: 9px; }
.bat { margin-left: 9px; }
.clock { width: 78px; margin-left: 10px; text-align: right; white-space: nowrap; letter-spacing: -.05px; }
</style>
